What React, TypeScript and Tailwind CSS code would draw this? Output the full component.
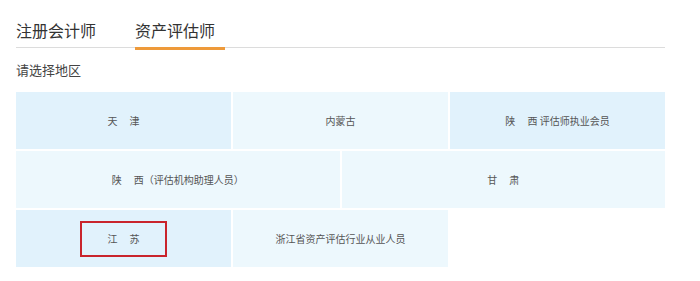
import React from 'react';

const font = { fontFamily: '"Noto Sans CJK SC", "Microsoft YaHei", sans-serif' };

const Cell = ({ label, dark, boxed, span }: { label: string; dark?: boolean; boxed?: boolean; span: string }) => (
  <div
    className={`${span} h-[57px] flex items-center justify-center text-[10px] text-[#555] ${
      dark ? 'bg-[#e1f2fc]' : 'bg-[#edf8fd]'
    }`}
  >
    {boxed ? (
      <span className="w-[87px] h-[36px] flex items-center justify-center border-2 border-[#c9242c] whitespace-pre">
        {label}
      </span>
    ) : (
      <span className="whitespace-pre">{label}</span>
    )}
  </div>
);

const App = () => {
  return (
    <div className="w-[700px] h-[281px] bg-white pl-[16px] pt-[18px]" style={font}>
      <div className="w-[649px] flex border-b border-[#dcdcdc] h-[30px]">
        <div className="text-[16px] leading-[24px] text-[#333]">注册会计师</div>
        <div className="ml-[39px] relative text-[16px] leading-[24px] text-[#333]">
          <span>资产评估师</span>
          <div className="absolute left-0 w-[90px] bottom-[-3px] h-[3px] bg-[#ee9a3a]" />
        </div>
      </div>
      <div className="mt-[12px] text-[13px] leading-[20px] text-[#444]">请选择地区</div>
      <div className="mt-[12px] w-[649px] grid grid-cols-6 gap-[2px]">
        <Cell span="col-span-2" label={'天\u3000 津'} dark />
        <Cell span="col-span-2" label="内蒙古" />
        <Cell span="col-span-2" label={'陕\u3000 西 评估师执业会员'} dark />
        <Cell span="col-span-3" label={'陕\u3000 西（评估机构助理人员）'} />
        <Cell span="col-span-3" label={'甘\u3000 肃'} />
        <Cell span="col-span-2" label={'江\u3000 苏'} dark boxed />
        <Cell span="col-span-2" label="浙江省资产评估行业从业人员" />
      </div>
    </div>
  );
};

export default App;
